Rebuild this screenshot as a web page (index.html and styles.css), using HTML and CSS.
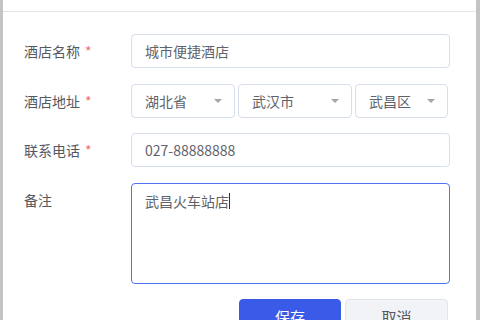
FILE: index.html
```html
<!DOCTYPE html>
<html lang="zh-CN">
<head>
    <meta charset="UTF-8">
    <meta name="viewport" content="width=device-width, initial-scale=1.0">
    <title>编辑酒店</title>
    <link rel="stylesheet" href="styles.css">
</head>
<body>
    <div class="dialog">
        <!-- Header (scrolled off) -->
        <div class="dialog-header"></div>

        <div class="dialog-body">
            <div class="form-row">
                <label class="form-label">酒店名称<span class="required">*</span></label>
                <div class="form-control">
                    <div class="input">城市便捷酒店</div>
                </div>
            </div>

            <div class="form-row">
                <label class="form-label">酒店地址<span class="required">*</span></label>
                <div class="form-control selects">
                    <div class="select">湖北省<span class="caret"></span></div>
                    <div class="select">武汉市<span class="caret"></span></div>
                    <div class="select">武昌区<span class="caret"></span></div>
                </div>
            </div>

            <div class="form-row">
                <label class="form-label">联系电话<span class="required">*</span></label>
                <div class="form-control">
                    <div class="input">027-88888888</div>
                </div>
            </div>

            <div class="form-row">
                <label class="form-label">备注</label>
                <div class="form-control">
                    <div class="textarea focused">武昌火车站店<span class="cursor"></span></div>
                </div>
            </div>

            <div class="form-actions">
                <button class="btn btn-primary">保存</button>
                <button class="btn btn-secondary">取消</button>
            </div>
        </div>
    </div>
</body>
</html>
```

FILE: styles.css
```css
* {
    margin: 0;
    padding: 0;
    box-sizing: border-box;
}

body {
    font-family: "Noto Sans CJK SC", "Noto Sans", sans-serif;
    background: #c4c4c4;
    height: 100vh;
    overflow: hidden;
    padding: 0 4px 0 3px;
}

.dialog {
    background: white;
    height: 100%;
}

.dialog-header {
    height: 12px;
    border-bottom: 1px solid #e3e4e8;
}

.dialog-body {
    padding: 22px 26px 0 21px;
}

.form-row {
    display: flex;
    margin-bottom: 15.5px;
}

.form-label {
    width: 107px;
    flex-shrink: 0;
    height: 34px;
    line-height: 34px;
    font-size: 14px;
    color: #55585f;
}

.required {
    color: #f56c6c;
    margin-left: 5px;
}

.form-control {
    flex: 1;
}

.input,
.select,
.textarea {
    border: 1px solid #d8dfec;
    border-radius: 4px;
    font-size: 14px;
    color: #5f636b;
    padding: 0 13px;
}

.input,
.select {
    height: 34px;
    line-height: 32px;
}

.selects {
    display: grid;
    grid-template-columns: 104px 114px 93px;
    gap: 3px;
}

.select {
    position: relative;
}

.caret {
    position: absolute;
    right: 12px;
    top: 14px;
    width: 0;
    height: 0;
    border-left: 4px solid transparent;
    border-right: 4px solid transparent;
    border-top: 4px solid #a3a6ad;
}

.textarea {
    height: 101px;
    padding-top: 6px;
    line-height: 22px;
}

.textarea.focused {
    border-color: #5172f2;
}

.cursor {
    display: inline-block;
    width: 1px;
    height: 16px;
    background: #303133;
    vertical-align: -2px;
}

.form-actions {
    display: flex;
    justify-content: flex-end;
    gap: 4px;
    padding-right: 2px;
}

.btn {
    height: 34px;
    border-radius: 4px;
    font-family: inherit;
    font-size: 15px;
    cursor: pointer;
}

.btn-primary {
    width: 102px;
    background: #3a5be8;
    border: 1px solid #3a5be8;
    color: white;
}

.btn-secondary {
    width: 103px;
    background: #f2f3f7;
    border: 1px solid #e1e4eb;
    color: #55585f;
}
```
